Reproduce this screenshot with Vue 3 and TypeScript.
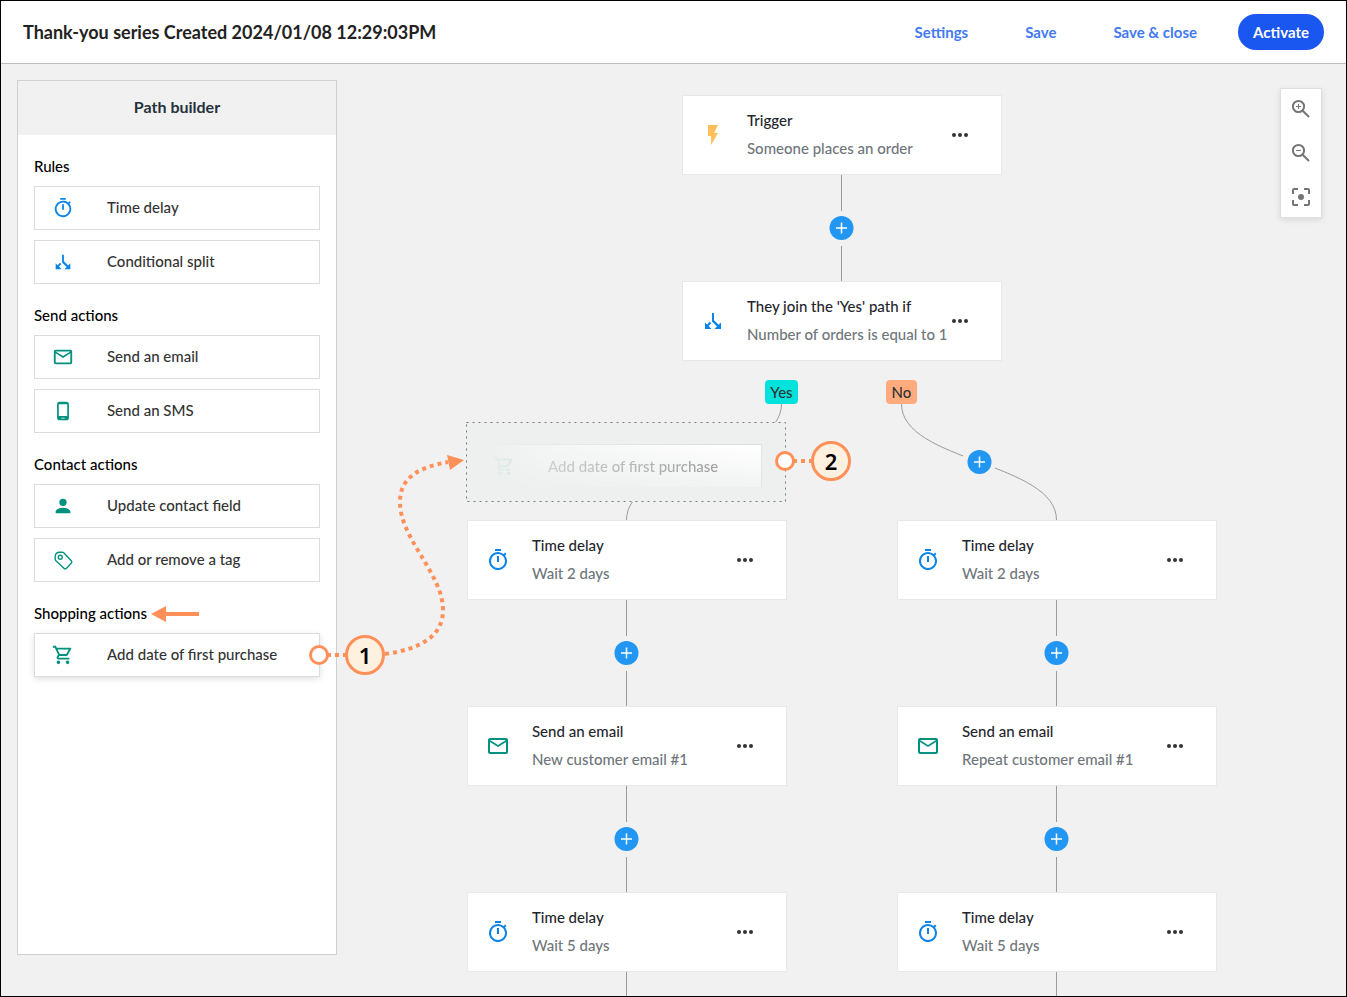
<script setup lang="ts">
type IconName = 'timer' | 'split' | 'mail' | 'phone' | 'person' | 'tag' | 'cart' | 'bolt'

interface Action { label: string; icon: IconName; tone: string; raised?: boolean }
interface Group { title: string; actions: Action[] }
interface FlowNode { x: number; y: number; title: string; detail: string; icon: IconName; tone: string }
interface Point { x: number; y: number }

const groups: Group[] = [
  { title: 'Rules', actions: [
    { label: 'Time delay', icon: 'timer', tone: 'blue' },
    { label: 'Conditional split', icon: 'split', tone: 'blue' },
  ] },
  { title: 'Send actions', actions: [
    { label: 'Send an email', icon: 'mail', tone: 'green' },
    { label: 'Send an SMS', icon: 'phone', tone: 'green' },
  ] },
  { title: 'Contact actions', actions: [
    { label: 'Update contact field', icon: 'person', tone: 'green' },
    { label: 'Add or remove a tag', icon: 'tag', tone: 'green' },
  ] },
  { title: 'Shopping actions', actions: [
    { label: 'Add date of first purchase', icon: 'cart', tone: 'green', raised: true },
  ] },
]

const nodes: FlowNode[] = [
  { x: 681, y: 31, title: 'Trigger', detail: 'Someone places an order', icon: 'bolt', tone: 'amber' },
  { x: 681, y: 217, title: "They join the 'Yes' path if", detail: 'Number of orders is equal to 1', icon: 'split', tone: 'blue' },
  { x: 466, y: 456, title: 'Time delay', detail: 'Wait 2 days', icon: 'timer', tone: 'blue' },
  { x: 466, y: 642, title: 'Send an email', detail: 'New customer email #1', icon: 'mail', tone: 'green' },
  { x: 466, y: 828, title: 'Time delay', detail: 'Wait 5 days', icon: 'timer', tone: 'blue' },
  { x: 896, y: 456, title: 'Time delay', detail: 'Wait 2 days', icon: 'timer', tone: 'blue' },
  { x: 896, y: 642, title: 'Send an email', detail: 'Repeat customer email #1', icon: 'mail', tone: 'green' },
  { x: 896, y: 828, title: 'Time delay', detail: 'Wait 5 days', icon: 'timer', tone: 'blue' },
]

const addPoints: Point[] = [
  { x: 840, y: 164 },
  { x: 978, y: 398 },
  { x: 625, y: 589 },
  { x: 1055, y: 589 },
  { x: 625, y: 775 },
  { x: 1055, y: 775 },
]

const place = (p: Point) => ({ left: `${p.x}px`, top: `${p.y}px` })
</script>

<template>
  <svg class="sprite" aria-hidden="true">
    <symbol id="timer" viewBox="0 0 24 24"><path d="M15 1H9v2h6V1zm-4 13h2V8h-2v6zm8.03-6.61 1.42-1.42a11 11 0 0 0-1.41-1.41l-1.42 1.42A9 9 0 1 0 19.03 7.39zM12 20a7 7 0 1 1 0-14 7 7 0 0 1 0 14z" /></symbol>
    <symbol id="split" viewBox="0 0 24 24"><path d="M11 4h2v7.2l4.6 4.6L20 13.4V20h-6.6l2.6-2.5-4-4-1-1zM4 13.400l2.100 2.100 2.700-2.700 1.500 1.500-2.700 2.700L10.400 20H4z" /></symbol>
    <symbol id="mail" viewBox="0 0 24 24"><path d="M20 4H4a2 2 0 0 0-2 2v12a2 2 0 0 0 2 2h16a2 2 0 0 0 2-2V6a2 2 0 0 0-2-2zm0 14H4V8l8 5 8-5v10zm-8-7L4 6h16l-8 5z" /></symbol>
    <symbol id="phone" viewBox="-1 -1 26 26"><path d="M16 1H8a3 3 0 0 0-3 3v16a3 3 0 0 0 3 3h8a3 3 0 0 0 3-3V4a3 3 0 0 0-3-3zm-2 20h-4v-1h4v1zm3-3H7V4h10v14z" /></symbol>
    <symbol id="person" viewBox="0 0 24 24"><path d="M12 12a4 4 0 1 0 0-8 4 4 0 0 0 0 8zm0 2c-2.67 0-8 1.34-8 4v2h16v-2c0-2.66-5.33-4-8-4z" /></symbol>
    <symbol id="tag" viewBox="0 0 24 24"><path d="M3.500 8.500C3.500 5.500 5.500 3.500 8.500 3.500H11c.8 0 1.300.2 1.800.7l8.200 8.600a2 2 0 0 1 0 2.800L15.800 21a2 2 0 0 1-2.800 0L4.300 12.800c-.6-.6-.8-1.200-.8-2z" fill="none" stroke="currentColor" stroke-width="1.500" /><circle cx="9" cy="9" r="2.200" fill="none" stroke="currentColor" stroke-width="1.400" /></symbol>
    <symbol id="cart" viewBox="0 0 24 24"><path d="M15.550 13c.75 0 1.410-.41 1.750-1.030l3.580-6.490A1 1 0 0 0 20.010 4H5.210l-.94-2H1v2h2l3.600 7.590-1.350 2.440C4.520 15.370 5.480 17 7 17h12v-2H7l1.100-2h7.450zM6.160 6h12.150l-2.760 5H8.530L6.160 6zM7 18a2 2 0 1 0 0 4 2 2 0 0 0 0-4zm10 0a2 2 0 1 0 0 4 2 2 0 0 0 0-4z" /></symbol>
    <symbol id="bolt" viewBox="0 0 24 24"><path d="M7 2v11h3v9l7-12h-4l4-8z" /></symbol>
  </svg>

  <div class="page">
    <header class="topbar">
      <h1>Thank-you series Created 2024/01/08 12:29:03PM</h1>
      <nav class="commands">
        <button type="button" class="link">Settings</button>
        <button type="button" class="link">Save</button>
        <button type="button" class="link">Save &amp; close</button>
        <button type="button" class="activate">Activate</button>
      </nav>
    </header>

    <main class="workspace">
      <aside class="builder">
        <h2>Path builder</h2>
        <div class="groups">
          <section v-for="group in groups" :key="group.title">
            <h3>{{ group.title }}</h3>
            <button v-for="action in group.actions" :key="action.label" type="button" class="action" :class="{ raised: action.raised }">
              <svg class="small-icon" :class="action.tone"><use :href="'#' + action.icon" /></svg>
              <span>{{ action.label }}</span>
            </button>
          </section>
        </div>
      </aside>

      <div class="canvas">
        <svg class="wires" aria-hidden="true">
          <path d="M840.5 111V147M840.5 182V217" />
          <path d="M780.5 340C780.5 398 625.5 398 625.5 456" />
          <path d="M900.5 340C900.5 398 1055.5 398 1055.5 456" />
          <circle cx="978" cy="398" r="17" />
          <path d="M625.5 536V572M625.5 607V642M625.5 722V758M625.5 793V828M625.5 908V1200" />
          <path d="M1055.5 536V572M1055.5 607V642M1055.5 722V758M1055.5 793V828M1055.5 908V1200" />
        </svg>

        <article v-for="node in nodes" :key="node.x + '-' + node.y" class="node" :style="place(node)">
          <svg class="node-icon" :class="node.tone"><use :href="'#' + node.icon" /></svg>
          <div class="node-text">
            <strong>{{ node.title }}</strong>
            <span>{{ node.detail }}</span>
          </div>
          <button type="button" class="more" aria-label="More options"><i></i><i></i><i></i></button>
        </article>

        <span class="badge yes">Yes</span>
        <span class="badge no">No</span>

        <button v-for="point in addPoints" :key="point.x + '-' + point.y" type="button" class="add" aria-label="Add step" :style="place(point)">
          <svg viewBox="0 0 25 24"><circle cx="12.5" cy="12" r="12" /><path d="M12.5 6.500v11M7 12h11" /></svg>
        </button>

        <div class="dropzone">
          <svg class="outline" aria-hidden="true"><rect x="0.5" y="0.5" width="319" height="79" /></svg>
          <div class="ghost">
            <svg class="small-icon green"><use href="#cart" /></svg>
            <span>Add date of first purchase</span>
          </div>
        </div>

        <div class="zoom">
          <button type="button" aria-label="Zoom in">
            <svg viewBox="0 0 24 24"><circle cx="9.500" cy="9.500" r="5.600" /><path d="M13.700 13.700l6.300 6.300" /><path class="thin" d="M9.500 7v5M7 9.500h5" /></svg>
          </button>
          <button type="button" aria-label="Zoom out">
            <svg viewBox="0 0 24 24"><circle cx="9.500" cy="9.500" r="5.600" /><path d="M13.700 13.700l6.300 6.300" /><path class="thin" d="M7 9.500h5" /></svg>
          </button>
          <button type="button" aria-label="Fit to screen">
            <svg viewBox="0 0 24 24"><path d="M4 9V5q0-1 1-1h4M15 4h4q1 0 1 1v4M20 15v4q0 1-1 1h-4M9 20H5q-1 0-1-1v-4" /><circle class="dot" cx="12" cy="12" r="3" /></svg>
          </button>
        </div>
      </div>

      <svg class="callouts" aria-hidden="true">
        <path class="shaft" d="M198 550H163" />
        <path class="head" d="M150 550L165 542V558Z" />
        <path class="trail" d="M326 591H345" />
        <path class="trail" d="M384 590C420 585 442 572 442 546C442 510 399 475 399 438C399 412 420 403 447 398" />
        <path class="head" d="M463 396L446 391L449 406Z" />
        <path class="trail" d="M792 397H811" />
        <circle class="ring" cx="318" cy="591" r="8.500" />
        <circle class="ring" cx="784" cy="397" r="8.500" />
      </svg>
      <span class="step one">1</span>
      <span class="step two">2</span>
    </main>
  </div>
</template>

<style>
body { margin: 0; }
</style>

<style scoped>
* { box-sizing: border-box; }
.sprite { position: absolute; width: 0; height: 0; }
.page {
  display: flex;
  flex-direction: column;
  min-height: 100vh;
  border: 1px solid #000;
  background: #f1f1f1;
  color: #24292e;
  font: 500 15px/20px Lato, "Open Sans", sans-serif;
}
button { font: inherit; color: inherit; border: 0; padding: 0; background: none; cursor: pointer; }
.topbar {
  display: flex;
  align-items: center;
  justify-content: space-between;
  height: 63px;
  padding: 0 22px;
  background: #fff;
  border-bottom: 1px solid #bdbdbd;
}
h1 { margin: 0; font-size: 18px; line-height: 24px; font-weight: 700; color: #222; }
.commands { display: flex; align-items: center; }
.link { margin-right: 57px; font-weight: 700; color: #4379f2; }
.link:nth-child(3) { margin-right: 41px; }
.activate { width: 86px; height: 36px; border-radius: 18px; background: #1a56f0; color: #fff; font-weight: 700; }
.workspace { position: relative; flex: 1; display: flex; padding: 16px 16px 41px; overflow: hidden; }
.builder { width: 320px; background: #fff; border: 1px solid #d0d0d0; }
h2 { margin: 0; height: 54px; background: #f1f1f1; font-size: 16px; line-height: 52px; font-weight: 700; text-align: center; color: #25313c; }
.groups { display: flex; flex-direction: column; gap: 22px; padding: 22px 16px; }
section { display: flex; flex-direction: column; gap: 10px; }
h3 { margin: 0; font-size: 15px; line-height: 19px; font-weight: 500; color: #000; }
.action { display: flex; align-items: center; gap: 33px; height: 44px; padding-left: 17px; border: 1px solid #dcdcdc; background: #fff; text-align: left; color: #333; }
.action span, .node-text { padding-bottom: 2px; }
.action.raised { box-shadow: 0 2px 6px rgba(0, 0, 0, 0.12); }
.small-icon { width: 22px; height: 22px; flex: none; fill: currentColor; }
.blue { color: #0a84e8; }
.green { color: #00917f; }
.amber { color: #ffbe57; }
.canvas, .wires, .callouts { position: absolute; inset: 0; width: 100%; height: 100%; pointer-events: none; }
.canvas button { pointer-events: auto; }
.wires { fill: none; stroke: #9b9b9b; stroke-width: 1; }
.wires circle { fill: #f1f1f1; stroke: none; }
.node { position: absolute; display: flex; align-items: center; width: 320px; height: 80px; padding-left: 18px; border: 1px solid #e6e8ea; background: #fff; }
.node-icon { width: 24px; height: 24px; flex: none; fill: currentColor; }
.node-text { display: flex; flex-direction: column; gap: 8px; width: 200px; margin-left: 22px; white-space: nowrap; }
.node-text strong { font-weight: 500; color: #1f262c; }
.node-text span { color: #6f767b; }
.more { display: flex; gap: 2px; margin-left: 5px; }
.more i { width: 4px; height: 4px; border-radius: 50%; background: #333; }
.badge { position: absolute; top: 316px; height: 24px; border-radius: 4px; line-height: 24px; text-align: center; color: #333; }
.yes { left: 764px; width: 33px; background: #00e3dc; }
.no { left: 885px; width: 31px; background: #ffab7d; }
.add { position: absolute; width: 25px; height: 24px; margin: -12px 0 0 -12px; }
.add svg { display: block; width: 25px; height: 24px; stroke: #fff; stroke-width: 1.5; }
.add circle { fill: #2196f3; stroke: none; }
.dropzone { position: absolute; left: 465px; top: 358px; width: 320px; height: 80px; padding: 22px 24px 0 10px; background: #eef0ef; }
.outline { position: absolute; inset: 0; width: 100%; height: 100%; fill: none; stroke: #737b7a; stroke-width: 1; stroke-dasharray: 2 4; }
.ghost {
  display: flex;
  align-items: center;
  gap: 33px;
  height: 43px;
  padding-left: 17px;
  border-top: 1px solid #dcdcdc;
  border-right: 1px solid #e4e4e4;
  background: linear-gradient(to top, rgba(255, 255, 255, 0.2), #fff);
  color: #333;
  mask-image: linear-gradient(to right, rgba(0, 0, 0, 0) 2%, rgba(0, 0, 0, 0.35) 25%, #000 95%);
}
.ghost span, .ghost svg { opacity: 0.5; }
.zoom { position: absolute; right: 24px; top: 24px; display: flex; flex-direction: column; align-items: center; justify-content: space-between; width: 42px; height: 130px; padding: 8px 0; border: 1px solid #dedede; background: #fff; box-shadow: 0 2px 6px rgba(0, 0, 0, 0.1); }
.zoom svg { display: block; width: 24px; height: 24px; fill: none; stroke: #757575; stroke-width: 2; }
.zoom .thin { stroke-width: 1; }
.zoom .dot { fill: #757575; stroke: none; }
.shaft { stroke: #ff9059; stroke-width: 4; }
.head { fill: #ff9059; }
.trail { fill: none; stroke: #ff9059; stroke-width: 4; stroke-dasharray: 4 4; }
.ring { fill: #fff; stroke: #ff9059; stroke-width: 3; }
.step { position: absolute; width: 40px; height: 40px; border: 3px solid #ff9059; border-radius: 50%; background: #fff1df; color: #000; font: 600 22px/34px "Noto Sans", "Open Sans", sans-serif; text-align: center; }
.one { left: 344px; top: 571px; }
.two { left: 810px; top: 377px; }
</style>
